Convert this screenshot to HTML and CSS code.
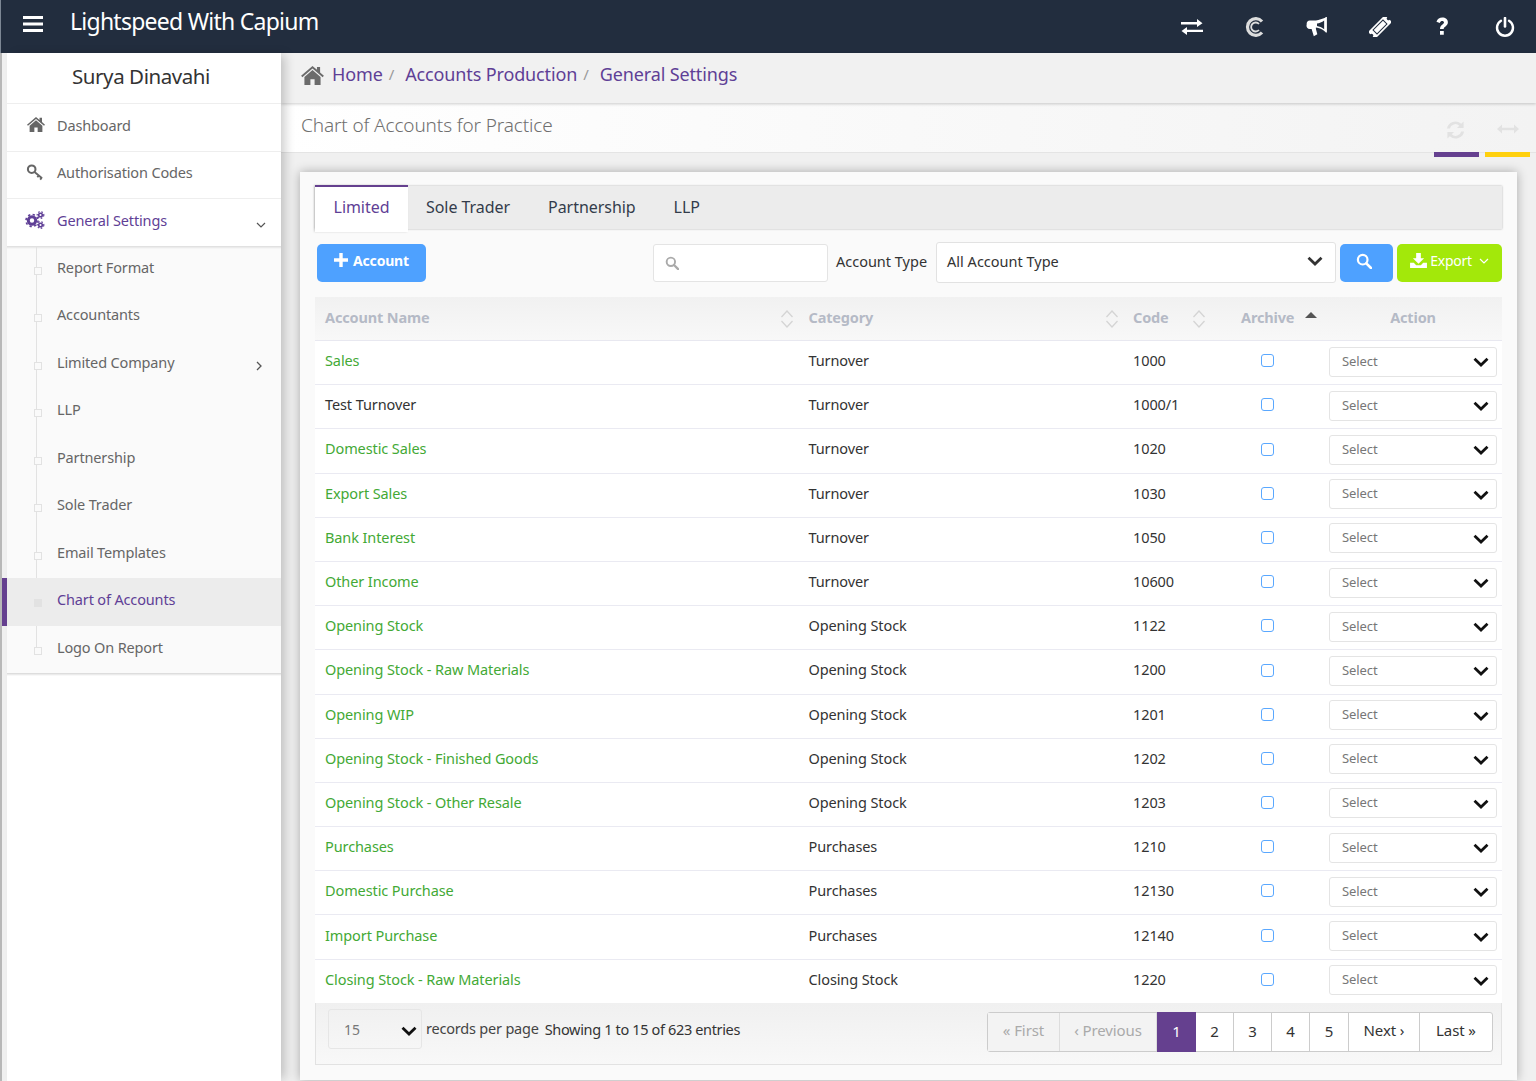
FILE: index.html
```html
<!DOCTYPE html>
<html lang="en">
<head>
<meta charset="utf-8">
<title>Chart of Accounts</title>
<link rel="stylesheet" href="styles.css">
</head>
<body>
<svg class="defs" width="0" height="0">
  <symbol id="i-chev" viewBox="0 0 16 10"><path d="M1.500 1.800 8 8l6.500-6.200" fill="none" stroke="currentColor" stroke-width="2.800"/></symbol>
  <symbol id="i-thin" viewBox="0 0 10 6"><path d="M1 1l4 4 4-4" fill="none" stroke="currentColor" stroke-width="1.200"/></symbol>
  <symbol id="i-right" viewBox="0 0 6 10"><path d="M1 1l4 4-4 4" fill="none" stroke="currentColor" stroke-width="1.300"/></symbol>
  <symbol id="i-sort" viewBox="0 0 14 20"><path d="M1.500 8 7 2l5.500 6M1.500 12 7 18l5.500-6" fill="none" stroke="currentColor" stroke-width="1.300"/></symbol>
  <symbol id="i-search" viewBox="0 0 16 16"><circle cx="6.700" cy="6.700" r="4.800" fill="none" stroke="currentColor" stroke-width="2.200"/><path d="M10.300 10.300 15 15" stroke="currentColor" stroke-width="2.600" stroke-linecap="round"/></symbol>
  <symbol id="i-home" viewBox="0 0 24 20"><path fill="currentColor" d="M12 0 0 10.300l1.300 1.500L12 2.600l10.700 9.200 1.300-1.500-4-3.500V1h-3.300v3L12 0zM12 4.300 3.500 11.600V20h6.300v-6h4.400v6h6.300v-8.400L12 4.300z"/></symbol>
</svg>

<header class="topbar">
  <svg class="burger" viewBox="0 0 20 16"><path fill="#fff" d="M0 0h20v3H0zM0 6.500h20v3H0zM0 13h20v3H0z"/></svg>
  <div class="brand">Lightspeed With Capium</div>
  <nav class="top-icons">
    <svg class="top-icon" viewBox="0 0 22 16"><path fill="#fff" d="M0 3h16V0l5.500 4.200L16 8V5.400H0zM22 10.700H6V8L.5 12 6 16v-3H22z"/></svg>
    <svg class="top-icon" viewBox="0 0 20 20"><path d="M17 4.500A8.300 8.300 0 1 0 17 15.500" fill="none" stroke="#ddd" stroke-width="3.200"/><path d="M14 7a4.500 4.500 0 1 0 0 6" fill="none" stroke="#ddd" stroke-width="1.800"/></svg>
    <svg class="top-icon" viewBox="0 0 20 18"><path fill="#fff" d="M18 0h1v14h-1l-.6-.6C15 11 12 9.800 9 9.500v1.300l1.300 4.800-3.200 1.800-2-6.500H3.500A3 3 0 0 1 .6 7V6a3 3 0 0 1 2.900-3H9c3-.4 6-1.400 8.400-2.400L18 0zm-1.500 3C14.500 4.500 12 5.500 10 5.900v2.200c2 .4 4.500 1.300 6.500 2.900V3z"/></svg>
    <svg class="top-icon" viewBox="0 0 20 20"><g transform="rotate(-45 10 10)"><path fill="#fff" d="M-2 5h24v3.300a1.700 1.700 0 0 0 0 3.400V15H-2v-3.300a1.700 1.700 0 0 0 0-3.400z"/><rect x="3" y="7.200" width="14" height="5.600" fill="none" stroke="#222d3e" stroke-width="1"/></g></svg>
    <svg class="top-icon" viewBox="0 0 12 18"><path fill="#fff" d="M1 4.200C2 1.600 3.800.5 6.300.5c2.800 0 5 1.700 5 4.300 0 2-1.100 3-2.400 3.900-1 .7-1.400 1.100-1.400 2.200H4.200c0-2 .7-3 2-4 1-.7 1.600-1.100 1.600-1.900 0-.9-.7-1.400-1.600-1.400-1 0-1.700.5-2.200 1.700L1 4.200zM4.200 12.600h3.400V16H4.200z"/></svg>
    <svg class="top-icon" viewBox="0 0 20 20"><path d="M6 3.800a8 8 0 1 0 8 0" fill="none" stroke="#fff" stroke-width="2.400" stroke-linecap="round"/><path d="M10 1v8.500" stroke="#fff" stroke-width="2.600" stroke-linecap="round"/></svg>
  </nav>
</header>

<div class="shell">
  <aside class="sidebar">
    <div class="user">Surya Dinavahi</div>
    <ul class="menu">
      <li class="menu-item">
        <svg class="menu-icon" viewBox="0 0 24 20"><use href="#i-home"/></svg><span>Dashboard</span>
      </li>
      <li class="menu-item">
        <svg class="menu-icon key" viewBox="0 0 18 18"><circle cx="5.500" cy="5.500" r="4" fill="none" stroke="currentColor" stroke-width="2.200"/><path d="M8.500 8.500 16.500 15M13 12l-1.500 2M16 14.500l-1.500 2" fill="none" stroke="currentColor" stroke-width="2"/></svg><span>Authorisation Codes</span>
      </li>
      <li class="menu-item open">
        <svg class="menu-icon gears" viewBox="0 0 20 18"><g fill="none" stroke="currentColor"><circle cx="7" cy="9.500" r="3.700" stroke-width="3"/><circle cx="7" cy="9.500" r="6" stroke-width="1.600" stroke-dasharray="2.300 2.400"/><circle cx="15.500" cy="4" r="1.800" stroke-width="1.600"/><circle cx="15.500" cy="4" r="3.300" stroke-width="1.200" stroke-dasharray="1.600 1.600"/><circle cx="15.500" cy="14" r="1.800" stroke-width="1.600"/><circle cx="15.500" cy="14" r="3.300" stroke-width="1.200" stroke-dasharray="1.600 1.600"/></g></svg><span>General Settings</span>
        <svg class="menu-arrow down"><use href="#i-thin"/></svg>
      </li>
    </ul>
    <ul class="submenu">
      <li class="sub-item">Report Format</li>
      <li class="sub-item">Accountants</li>
      <li class="sub-item">Limited Company<svg class="menu-arrow side"><use href="#i-right"/></svg></li>
      <li class="sub-item">LLP</li>
      <li class="sub-item">Partnership</li>
      <li class="sub-item">Sole Trader</li>
      <li class="sub-item">Email Templates</li>
      <li class="sub-item current">Chart of Accounts</li>
      <li class="sub-item">Logo On Report</li>
    </ul>
  </aside>

  <main class="main">
    <div class="crumbs">
      <svg class="crumb-home"><use href="#i-home"/></svg>
      <a class="crumb">Home</a><span class="sep">/</span>
      <a class="crumb">Accounts Production</a><span class="sep">/</span>
      <a class="crumb">General Settings</a>
    </div>
    <div class="titlebar">
      <h1 class="page-title">Chart of Accounts for Practice</h1>
      <div class="title-tools">
        <div class="tool">
          <svg class="tool-icon" viewBox="0 0 20 20"><path fill="#e2e2e2" d="M1 8.500A9 9 0 0 1 16 3.500L18.500 1v7h-7l2.500-2.500A6 6 0 0 0 4 8.500H1zM19 11.500A9 9 0 0 1 4 16.500L1.500 19v-7h7L6 14.500A6 6 0 0 0 16 11.500h3z"/></svg>
          <i class="mark purple"></i>
        </div>
        <div class="tool">
          <svg class="tool-icon" viewBox="0 0 22 10"><path fill="#e2e2e2" d="M0 5 5 .5V3.700h12V.5L22 5l-5 4.500V6.300H5v3.200z"/></svg>
          <i class="mark yellow"></i>
        </div>
      </div>
    </div>

    <section class="card">
      <div class="tabs">
        <div class="tab active">Limited</div>
        <div class="tab">Sole Trader</div>
        <div class="tab">Partnership</div>
        <div class="tab">LLP</div>
      </div>

      <div class="toolbar">
        <button class="btn btn-add"><svg class="plus" viewBox="0 0 14 14"><path fill="#fff" d="M5.300 0h3.400v5.300H14v3.400H8.700V14H5.300V8.700H0V5.300h5.300z"/></svg>Account</button>
        <div class="search"><svg class="search-icon"><use href="#i-search"/></svg></div>
        <label class="type-label">Account Type</label>
        <div class="type-select">All Account Type<svg class="chev-dark"><use href="#i-chev"/></svg></div>
        <button class="btn btn-search"><svg class="search-white"><use href="#i-search"/></svg></button>
        <button class="btn btn-export"><svg class="dl" viewBox="0 0 18 16"><path fill="#fff" d="M6.500 0h5v5.500h3.500L9 11.500 3 5.500h3.500zM0 10.500h4l2.500 2.500h5l2.500-2.500h4V16H0z"/></svg>Export<svg class="export-chev"><use href="#i-thin"/></svg></button>
      </div>

      <table class="grid">
        <colgroup><col class="c1"><col class="c2"><col class="c3"><col class="c4"><col class="c5"></colgroup>
        <thead>
          <tr>
            <th><div class="th-in">Account Name<svg class="sort"><use href="#i-sort"/></svg></div></th>
            <th><div class="th-in">Category<svg class="sort"><use href="#i-sort"/></svg></div></th>
            <th><div class="th-in">Code<svg class="sort sort-code"><use href="#i-sort"/></svg></div></th>
            <th><div class="th-arch">Archive<i class="caret"></i></div></th>
            <th class="th-action">Action</th>
          </tr>
        </thead>
        <tbody>
          <tr><td><a class="acc">Sales</a></td><td>Turnover</td><td>1000</td><td><i class="check"></i></td><td><div class="sel">Select<svg class="chev"><use href="#i-chev"/></svg></div></td></tr>
          <tr><td>Test Turnover</td><td>Turnover</td><td>1000/1</td><td><i class="check"></i></td><td><div class="sel">Select<svg class="chev"><use href="#i-chev"/></svg></div></td></tr>
          <tr><td><a class="acc">Domestic Sales</a></td><td>Turnover</td><td>1020</td><td><i class="check"></i></td><td><div class="sel">Select<svg class="chev"><use href="#i-chev"/></svg></div></td></tr>
          <tr><td><a class="acc">Export Sales</a></td><td>Turnover</td><td>1030</td><td><i class="check"></i></td><td><div class="sel">Select<svg class="chev"><use href="#i-chev"/></svg></div></td></tr>
          <tr><td><a class="acc">Bank Interest</a></td><td>Turnover</td><td>1050</td><td><i class="check"></i></td><td><div class="sel">Select<svg class="chev"><use href="#i-chev"/></svg></div></td></tr>
          <tr><td><a class="acc">Other Income</a></td><td>Turnover</td><td>10600</td><td><i class="check"></i></td><td><div class="sel">Select<svg class="chev"><use href="#i-chev"/></svg></div></td></tr>
          <tr><td><a class="acc">Opening Stock</a></td><td>Opening Stock</td><td>1122</td><td><i class="check"></i></td><td><div class="sel">Select<svg class="chev"><use href="#i-chev"/></svg></div></td></tr>
          <tr><td><a class="acc">Opening Stock - Raw Materials</a></td><td>Opening Stock</td><td>1200</td><td><i class="check"></i></td><td><div class="sel">Select<svg class="chev"><use href="#i-chev"/></svg></div></td></tr>
          <tr><td><a class="acc">Opening WIP</a></td><td>Opening Stock</td><td>1201</td><td><i class="check"></i></td><td><div class="sel">Select<svg class="chev"><use href="#i-chev"/></svg></div></td></tr>
          <tr><td><a class="acc">Opening Stock - Finished Goods</a></td><td>Opening Stock</td><td>1202</td><td><i class="check"></i></td><td><div class="sel">Select<svg class="chev"><use href="#i-chev"/></svg></div></td></tr>
          <tr><td><a class="acc">Opening Stock - Other Resale</a></td><td>Opening Stock</td><td>1203</td><td><i class="check"></i></td><td><div class="sel">Select<svg class="chev"><use href="#i-chev"/></svg></div></td></tr>
          <tr><td><a class="acc">Purchases</a></td><td>Purchases</td><td>1210</td><td><i class="check"></i></td><td><div class="sel">Select<svg class="chev"><use href="#i-chev"/></svg></div></td></tr>
          <tr><td><a class="acc">Domestic Purchase</a></td><td>Purchases</td><td>12130</td><td><i class="check"></i></td><td><div class="sel">Select<svg class="chev"><use href="#i-chev"/></svg></div></td></tr>
          <tr><td><a class="acc">Import Purchase</a></td><td>Purchases</td><td>12140</td><td><i class="check"></i></td><td><div class="sel">Select<svg class="chev"><use href="#i-chev"/></svg></div></td></tr>
          <tr><td><a class="acc">Closing Stock - Raw Materials</a></td><td>Closing Stock</td><td>1220</td><td><i class="check"></i></td><td><div class="sel">Select<svg class="chev"><use href="#i-chev"/></svg></div></td></tr>
        </tbody>
      </table>

      <div class="footer">
        <div class="per-page">15<svg class="chev"><use href="#i-chev"/></svg></div>
        <span class="rec">records per page</span>
        <span class="showing">Showing 1 to 15 of 623 entries</span>
        <div class="pager">
          <span class="pg off pg-first">« First</span>
          <span class="pg off pg-prev">‹ Previous</span>
          <span class="pg now">1</span>
          <span class="pg num">2</span>
          <span class="pg num">3</span>
          <span class="pg num">4</span>
          <span class="pg num">5</span>
          <span class="pg pg-next">Next ›</span>
          <span class="pg pg-last">Last »</span>
        </div>
      </div>
    </section>
  </main>
</div>
</body>
</html>
```

FILE: styles.css
```css
* { box-sizing: border-box; }
html, body { margin: 0; height: 1081px; overflow: hidden; }
body {
  font-family: "Noto Sans", "Open Sans", sans-serif;
  font-size: 14.5px;
  color: #333;
  background: #f0f0f0;
}
.defs { position: absolute; }
ul { list-style: none; margin: 0; padding: 0; }

/* top bar */
.topbar {
  height: 53px;
  background: #222d3e;
  border-left: 1px solid #7d8794;
  display: flex;
  align-items: flex-start;
  color: #fff;
}
.burger { width: 20px; height: 16px; margin: 16px 0 0 22px; }
.brand { font-size: 23px; margin: 3px 0 0 27px; line-height: 36px; letter-spacing: -0.75px; }
.top-icons {
  margin-left: auto;
  display: flex;
  align-items: center;
  height: 53px;
  padding-right: 20px;
}
.top-icon { width: 22px; height: 20px; margin-left: 40.6px; }

/* layout */
.shell { display: flex; height: 1028px; border-left: 2px solid #b8b8b8; }
.sidebar {
  width: 274px;
  margin-left: 5px;
  background: #fff;
  flex: none;
  box-shadow: 6px 0 10px -2px rgba(0,0,0,.2);
  position: relative;
  z-index: 1;
}
.user {
  height: 50px;
  line-height: 46px;
  text-align: center;
  font-size: 20.5px;
  letter-spacing: -0.43px;
  color: #333;
  padding-right: 6px;
}
.menu-item {
  height: 47.5px;
  border-top: 1px solid #eee;
  display: flex;
  align-items: center;
  color: #666;
  padding: 0 15px 5px 20px;
  font-size: 14.5px;
  letter-spacing: -0.15px;
}
.menu-item span { margin-left: 12px; }
.menu-icon { width: 18px; height: 15px; color: #666; flex: none; }
.menu-icon.key { height: 17px; margin-left: -1px; margin-right: 1px; }
.menu-icon.gears { width: 20px; height: 18px; margin-left: -2px; }
.menu-item.open, .menu-item.open .menu-icon { color: #5f3f96; }
.menu-arrow { margin-left: auto; color: #555; }
.menu-arrow.down { width: 10px; height: 6px; margin-top: 11px; }
.menu-arrow.side { width: 6px; height: 10px; margin-top: 8px; }
.submenu {
  background: linear-gradient(rgba(0,0,0,.12), transparent 3px), #fafafa;
  position: relative;
  height: 427px;
}
.submenu::before {
  content: "";
  position: absolute;
  left: 29px; top: 0; height: 404px;
  width: 1px;
  background: #e2e2e2;
}
.submenu::after {
  content: "";
  position: absolute;
  left: 0; right: 0; top: 100%;
  height: 3px;
  background: linear-gradient(rgba(0,0,0,.16), transparent);
}
.sub-item {
  height: 47.5px;
  display: flex;
  align-items: center;
  padding: 0 19px 5px 50px;
  color: #666;
  position: relative;
  font-size: 14.5px;
  letter-spacing: -0.15px;
}
.sub-item::before {
  content: "";
  position: absolute;
  left: 27px; top: 50%;
  margin-top: -2.5px;
  width: 6px; height: 6px;
  background: #fafafa;
  border: 1px solid #e2e2e2;
}
.sub-item.current {
  background: #ececec;
  color: #5f3f96;
}
.sub-item.current::before { background: #e2e2e2; }
.sub-item.current::after {
  content: "";
  position: absolute;
  left: -5px; top: 0; bottom: 0;
  width: 5px;
  background: #65408f;
}

/* main */
.main { flex: 1; min-width: 0; }
.crumbs {
  height: 50px;
  background: #f1f1f1;
  display: flex;
  align-items: center;
  padding: 0 0 8px 20px;
  box-shadow: 0 1px 3px rgba(0,0,0,.2);
  position: relative;
  font-size: 18px;
  letter-spacing: -0.13px;
}
.crumb-home { width: 23px; height: 19px; color: #6b6b6b; margin-right: 8px; margin-top: 3px; }
.crumb { color: #5f3f96; }
.sep { color: #999; margin: 0 11px 0 6px; font-size: 15px; }
.titlebar {
  height: 50px;
  background: linear-gradient(90deg, #fff, #f3f3f3);
  border-bottom: 1px solid #e4e4e4;
  display: flex;
  padding-left: 20px;
}
.page-title { margin: 9px 0 0; font-size: 19px; font-weight: 300; letter-spacing: -0.13px; color: #6f6f6f; line-height: 26px; }
.title-tools { margin-left: auto; display: flex; gap: 6px; padding-right: 6px; }
.tool { width: 45px; position: relative; display: flex; justify-content: center; padding-top: 17px; }
.tool-icon { width: 19px; height: 20px; margin-right: 3px; }
.tool:last-child .tool-icon { width: 22px; height: 10px; margin: 4px 0 0; }
.mark { position: absolute; left: 0; right: 0; bottom: -5px; height: 5px; }
.purple { background: #65408f; }
.yellow { background: #ffd00d; }

/* card */
.card {
  margin: 19px 19px 0 19px;
  height: 908px;
  background: #fafafa;
  box-shadow: 0 0 10px rgba(0,0,0,.3);
  padding: 14px 15px 0;
  position: relative;
}
.tabs {
  height: 43px;
  background: #ececec;
  display: flex;
  box-shadow: 0 0 2px rgba(0,0,0,.3);
  font-size: 16px;
  letter-spacing: -0.05px;
  color: #333c4b;
}
.tab { padding: 0 19px; line-height: 43px; }
.tab.active {
  width: 93px;
  height: 47px;
  margin: -1px -1px 0 0;
  background: #fff;
  border-top: 2px solid #65408f;
  color: #5f3f96;
  padding: 0;
  text-align: center;
  line-height: 41px;
  box-shadow: -1px 0 2px rgba(0,0,0,.15);
}

.toolbar {
  height: 68px;
  display: flex;
  align-items: flex-start;
  padding-top: 13px;
}
.btn { border: 0; color: #fff; font-family: inherit; display: flex; align-items: center; justify-content: center; border-radius: 5px; height: 38px; padding: 0; }
.btn-add {
  width: 109px; margin: 2px 0 0 2px;
  background: #4ea1ff;
  font-size: 14px;
  font-weight: 700;
  letter-spacing: -0.2px;
  padding-bottom: 6px;
}
.plus { width: 14px; height: 14px; margin-right: 5px; }
.search {
  width: 175px; height: 38px;
  margin: 2px 0 0 227px;
  background: #fff;
  border: 1px solid #e4e4e4;
  border-radius: 3px;
  display: flex;
  align-items: center;
  padding-left: 11px;
}
.search-icon { width: 14px; height: 14px; color: #aaa; }
.type-label { margin: 9px 0 0 8px; color: #333; font-size: 14.5px; }
.type-select {
  width: 400px; height: 41px;
  margin-left: 9px;
  background: #fff;
  border: 1px solid #e2e2e2;
  border-radius: 3px;
  display: flex;
  align-items: center;
  padding: 0 12px 4px 10px;
  font-size: 14.5px;
  color: #333;
}
.chev-dark { width: 16px; height: 10px; margin-left: auto; color: #333; }
.btn-search { width: 53px; margin: 2px 0 0 4px; background: #4ea1ff; }
.search-white { width: 16px; height: 16px; color: #fff; margin: 0 5px 4px 0; }
.btn-export { width: 105px; margin: 2px 0 0 4px; background: #a3e80a; font-size: 14px; letter-spacing: -0.3px; padding-bottom: 5px; }
.dl { width: 17px; height: 15px; margin-right: 3px; }
.export-chev { width: 10px; height: 6px; margin-left: 7px; color: #fff; }

/* table */
.grid { width: 100%; border-collapse: collapse; table-layout: fixed; background: #fff; }
.c1 { width: 483.5px; }
.c2 { width: 324.5px; }
.c3 { width: 108px; }
.c4 { width: 89px; }
.grid th {
  height: 43.5px;
  padding: 0 10px 4px;
  text-align: left;
  font-weight: 700;
  font-size: 14.5px;
  letter-spacing: -0.15px;
  color: #b5bac6;
  background: linear-gradient(#f1f1f1, #f8f8f8);
  border-bottom: 1px solid #e8e8f0;
}
.th-in { display: flex; align-items: center; justify-content: space-between; }
.sort { width: 14px; height: 20px; color: #d4d4d4; margin-right: -5.5px; margin-bottom: -4px; }
.sort-code { margin-right: 15px; }
.th-arch { display: flex; align-items: center; }
.caret { margin: -3px 0 0 11px; width: 0; height: 0; border: 6px solid transparent; border-top: 0; border-bottom-color: #555; }
.grid th.th-action { text-align: center; padding: 0 5px 4px 9px; }
.grid td {
  height: 44.2px;
  padding: 0 10px 5px;
  font-size: 14.5px;
  letter-spacing: -0.1px;
  color: #333;
  border-bottom: 1px solid #eaeaf2;
}
.grid tr:last-child td { border-bottom: 0; }
.grid td:nth-child(4) { text-align: center; padding: 0 17px 8px 0; }
.grid td:nth-child(5) { padding: 0 5px 2px 9px; }
.acc { color: #43a935; }
.check { display: inline-block; width: 13px; height: 13px; border: 1px solid #5aa8ff; border-radius: 3px; background: #fff; vertical-align: middle; }
.sel {
  height: 30px;
  background: #fff;
  border: 1px solid #e4e4e4;
  border-radius: 3px;
  display: flex;
  align-items: center;
  padding: 0 7px 2px 12px;
  font-size: 13px;
  letter-spacing: -0.1px;
  color: #777;
}
.chev { width: 16px; height: 10px; margin-left: auto; margin-top: 3px; color: #111; }

/* footer */
.footer {
  height: 62px;
  background: linear-gradient(#f0f0f0, #f8f8f8);
  border: 1px solid #e2e2e2;
  border-top: 0;
  display: flex;
  align-items: flex-start;
  padding-left: 12px;
  font-size: 14.5px;
}
.per-page {
  width: 94px; height: 40px;
  margin-top: 6px;
  border: 1px solid #e6e6e6;
  border-radius: 3px;
  display: flex;
  align-items: center;
  padding: 0 4px 0 15px;
  color: #777;
  font-size: 14px;
}
.rec { margin: 15px 0 0 4px; color: #444; letter-spacing: -0.2px; }
.showing { margin: 16px 0 0 6px; color: #333; letter-spacing: -0.35px; }
.pager {
  margin: 9px 8px 0 auto;
  display: flex;
  height: 40px;
  border: 1px solid #ccc;
  border-radius: 3px;
  background: #fff;
  font-size: 15px;
  letter-spacing: -0.1px;
}
.pg { display: flex; align-items: center; justify-content: center; padding-bottom: 5px; border-right: 1px solid #ccc; color: #333; }
.pg:last-child { border-right: 0; }
.off { color: #aaa; background: #f3f3f3; border-right-color: #ddd; }
.pg-first { width: 72px; }
.pg-prev { width: 97px; }
.now { width: 39px; background: #65408f; color: #fff; border-right: 0; margin: -1px 0; padding-bottom: 3px; }
.num { width: 38px; padding-bottom: 3px; }
.num:nth-child(7) { width: 39px; }
.pg-next { width: 71px; }
.pg-last { width: 72px; }
```
